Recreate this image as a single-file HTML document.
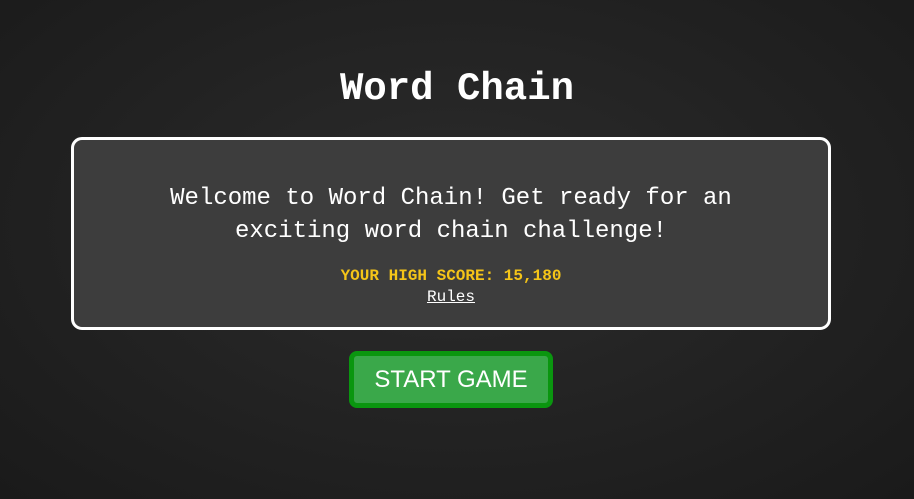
<!DOCTYPE html>
<html><head><style>
html,body{margin:0;width:914px;height:499px;overflow:hidden}
body{background:radial-gradient(ellipse at 50% 45%,#2c2c2c 0%,#222 55%,#1a1a1a 100%);font-family:"Liberation Mono",monospace;color:#fff;position:relative}
h1{position:absolute;top:64px;left:0;width:914px;text-align:center;margin:0;font-size:39px;font-weight:bold;line-height:50px}
.box{position:absolute;left:71px;top:137px;width:754px;height:187px;border:3px solid #fff;border-radius:11px;background:#3d3d3d;text-align:center}
.msg{margin-top:42px;font-size:24px;line-height:33px}
.score{margin-top:18px;color:#f5c518;font-size:16px;font-weight:bold;line-height:20px}
.rules{font-size:16px;line-height:22px;text-decoration:underline}
.btn{position:absolute;left:349px;top:351px;width:194px;height:47px;border:5px solid #0a960f;border-radius:8px;background:#3aa84a;font-family:"Liberation Sans",Arial,sans-serif;font-size:24px;line-height:47px;text-align:center;color:#fff}
</style></head><body>
<h1>Word Chain</h1>
<div class="box"><div class="msg">Welcome to Word Chain! Get ready for an<br>exciting word chain challenge!</div>
<div class="score">YOUR HIGH SCORE: 15,180</div>
<div class="rules">Rules</div></div>
<div class="btn">START GAME</div>
</body></html>
